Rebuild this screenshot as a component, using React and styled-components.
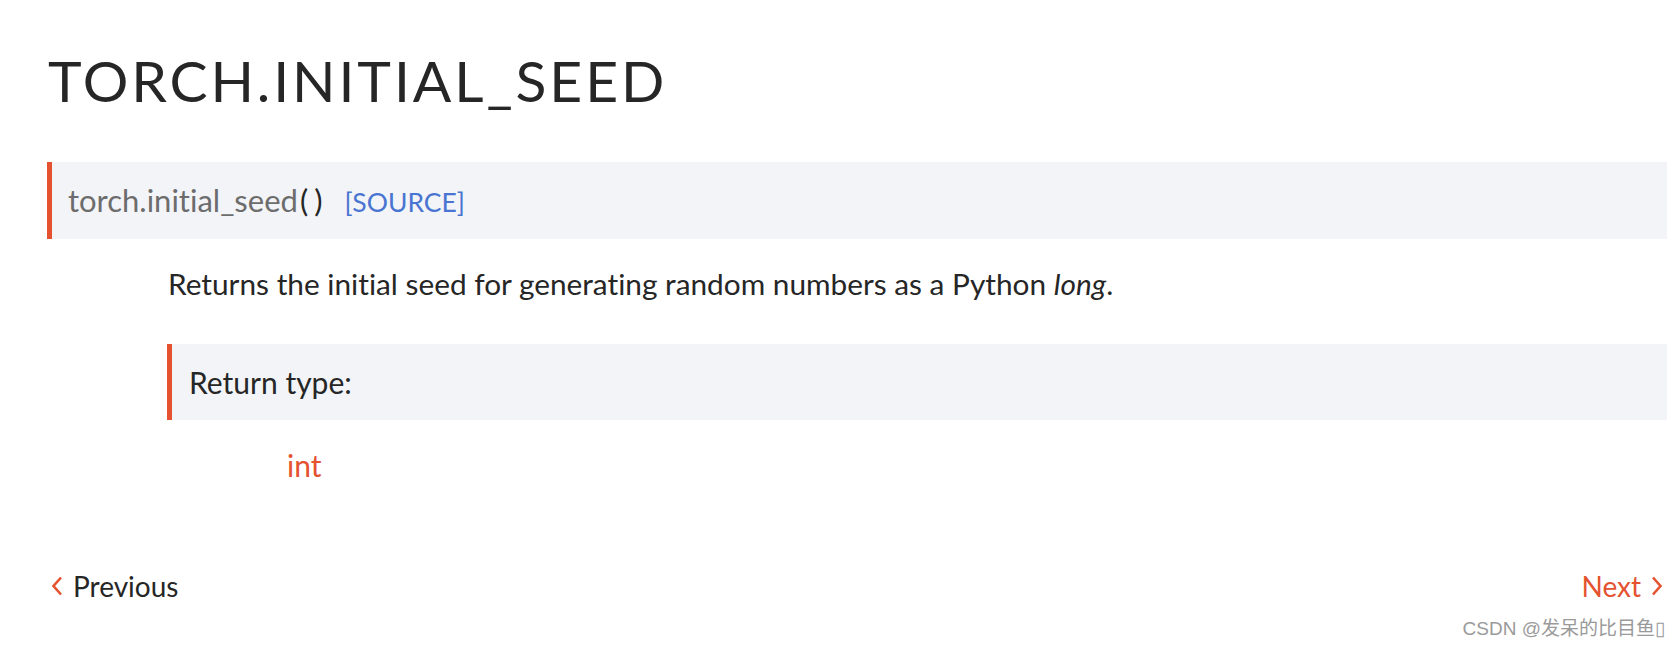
import React from "react";
import styled, { createGlobalStyle } from "styled-components";

const Global = createGlobalStyle`
  html, body { margin: 0; padding: 0; background: #ffffff; }
  body {
    font-family: Lato, "Open Sans", sans-serif;
    color: #262626;
    font-variant-ligatures: none;
    font-feature-settings: "liga" 0, "clig" 0;
  }
`;

const ORANGE = "#e4522f";

const Page = styled.main`
  padding: 0 11px 0 47px;
`;

const Title = styled.h1`
  margin: 46px 0 0 1px;
  font-family: Lato, sans-serif;
  font-weight: 400;
  font-size: 57px;
  line-height: 68px;
  letter-spacing: 2.9px;
  color: #262626;
`;

const Signature = styled.dt`
  margin: 48px 0 0 0;
  height: 77px;
  display: flex;
  align-items: baseline;
  background: #f3f4f7;
  border-left: 5px solid ${ORANGE};
  padding-left: 16px;
  font-size: 31px;
  line-height: 77px;
`;

const SigName = styled.span`
  color: #6c6c6d;
`;

const Parens = styled.span`
  display: inline-flex;
  gap: 6px;
  margin-left: 2px;
  color: #262626;
`;

const SourceLink = styled.a`
  color: #4974d1;
  text-decoration: none;
  font-size: 26.5px;
  margin-left: 22px;
`;

const Body = styled.dd`
  margin: 0 0 0 120px;
`;

const Description = styled.p`
  margin: 25px 0 0 1px;
  font-size: 29.8px;
  line-height: 40px;
  color: #262626;
`;

const FieldBox = styled.div`
  margin-top: 40px;
  height: 76px;
  background: #f3f4f7;
  border-left: 5px solid ${ORANGE};
  padding-left: 17px;
  font-size: 30px;
  line-height: 76px;
  color: #262626;
`;

const FieldValue = styled.div`
  margin: 25px 0 0 120px;
  font-size: 30px;
  line-height: 40px;
  color: ${ORANGE};
`;

const Footer = styled.nav`
  margin: 81px 4px 0 4px;
  display: flex;
  justify-content: space-between;
  font-size: 28px;
  line-height: 40px;
`;

const NavLink = styled.a`
  display: flex;
  align-items: center;
  gap: 10px;
  color: ${(p) => (p.$accent ? ORANGE : "#262626")};
  text-decoration: none;
`;

const Chevron = styled.svg`
  width: 12px;
  height: 22px;
  flex: none;
`;

const Watermark = styled.div`
  margin: 12px 2px 0 0;
  text-align: right;
  font-family: "Liberation Sans", "Noto Sans CJK SC", sans-serif;
  font-size: 19px;
  line-height: 22px;
  color: #9a9a9a;
`;

const Left = () => (
  <Chevron viewBox="0 0 12 22">
    <path d="M10 2.5 L2.5 11 L10 19.5" fill="none" stroke={ORANGE} strokeWidth="2.6" />
  </Chevron>
);

const Right = () => (
  <Chevron viewBox="0 0 12 22">
    <path d="M2 2.5 L9.5 11 L2 19.5" fill="none" stroke={ORANGE} strokeWidth="2.6" />
  </Chevron>
);

export default function App() {
  return (
    <>
      <Global />
      <Page>
        <Title>TORCH.INITIAL_SEED</Title>
        <dl style={{ margin: 0 }}>
          <Signature>
            <SigName>torch.initial_seed</SigName>
            <Parens>
              <span>(</span>
              <span>)</span>
            </Parens>
            <SourceLink href="#">[SOURCE]</SourceLink>
          </Signature>
          <Body>
            <Description>
              Returns the initial seed for generating random numbers as a Python <em>long</em>.
            </Description>
            <FieldBox>Return type:</FieldBox>
            <FieldValue>int</FieldValue>
          </Body>
        </dl>
        <Footer>
          <NavLink href="#">
            <Left />
            Previous
          </NavLink>
          <NavLink href="#" $accent>
            Next
            <Right />
          </NavLink>
        </Footer>
        <Watermark>CSDN @发呆的比目鱼▯</Watermark>
      </Page>
    </>
  );
}
